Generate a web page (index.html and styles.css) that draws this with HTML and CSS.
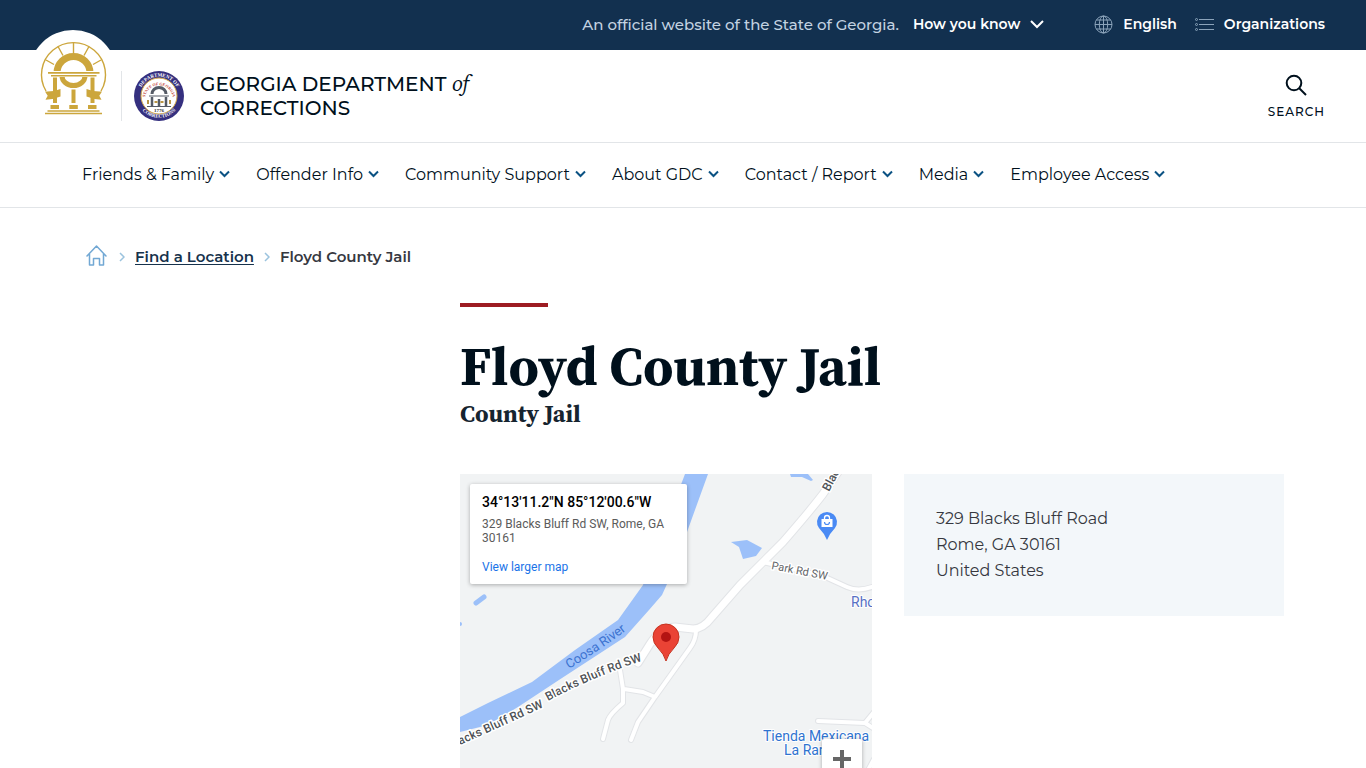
FILE: index.html
```html
<!DOCTYPE html>
<html lang="en">
	<head>
		<meta charset="utf-8">
		<meta name="viewport" content="width=device-width, initial-scale=1">
		<title>Floyd County Jail | Georgia Department of Corrections</title>
		<link rel="stylesheet" href="styles.css">
	</head>
	<body>
		<div class="topbar">
			<div class="official">
				<span>An official website of the State of Georgia.</span>
				<button type="button" class="know">How you know
					<svg width="14" height="9" viewBox="0 0 14 9"><path d="M1 1l6 6 6-6" fill="none" stroke="#fff" stroke-width="2"/></svg>
				</button>
			</div>
			<div class="top-links">
				<a href="#">
					<svg width="19" height="19" viewBox="0 0 19 19" fill="none" stroke="#8ba3ba" stroke-width="1">
						<circle cx="9.500" cy="9.500" r="8.500"/>
						<ellipse cx="9.500" cy="9.500" rx="4.200" ry="8.500"/>
						<path d="M9.500 1v17M1 9.500h17M2.500 5h14M2.500 14h14"/>
					</svg>
					English
				</a>
				<a href="#">
					<svg width="19" height="13" viewBox="0 0 19 13" fill="none" stroke="#8ba3ba" stroke-width="1">
						<circle cx="1.500" cy="1.500" r="1"/><circle cx="1.500" cy="6.500" r="1"/><circle cx="1.500" cy="11.500" r="1"/>
						<path d="M4 1.500h15M4 6.500h15M4 11.500h15"/>
					</svg>
					Organizations
				</a>
			</div>
		</div>

		<header class="header">
			<a href="#" class="arch" aria-label="Georgia.gov">
				<svg width="88" height="88" viewBox="29 30 88 88">
					<circle cx="73" cy="74" r="44" fill="#fff"/>
					<g fill="none" stroke="#cca63c">
						<path d="M46 91A32 32 0 1 1 101 91" stroke-width="1.400"/>
						<path d="M73.500 42v11M58 46.500l5 9M89 46.500l-5 9M46 60l8 4.500M101 60l-8 4.500" stroke-width="1.400"/>
						<path d="M57 73a16.500 16.500 0 0 1 33 0" stroke-width="7"/>
						<path d="M62 76a11.500 9.500 0 0 0 23 0" stroke-width="5"/>
					</g>
					<path d="M47 71h53v6H47z" fill="#fff"/>
					<g fill="#cca63c">
						<path d="M48 72h51.500v1.700H48zM51 75h45.500v1.500H51z"/>
						<path d="M53 77.500h4V103h-4zM71.500 89.500h4V103h-4zM90.500 77.500h4V103h-4z"/>
						<path d="M50.500 105h8.500v4h-8.500zM69.300 105h8.500v4h-8.500zM88 105h8.500v4H88z"/>
						<path d="M47.500 110.300h52v1.400h-52zM45 112.800h57v1.400H45z"/>
						<path d="M45 91.500q8 .5 15.500-2.500v7.500q-7 3-15 3.200l2.200-4zM102 91.500q-8 .5-15.500-2.500v7.500q7 3 15 3.200l-2.200-4z"/>
					</g>
				</svg>
			</a>
			<a href="#" class="agency">
				<svg class="seal" width="50" height="50" viewBox="0 0 50 50">
					<defs>
						<path id="ring-top" d="M5.500 30A20 20 0 1 1 44.500 30"/>
						<path id="ring-bottom" d="M3 29A22.500 22.500 0 0 0 47 29"/>
						<path id="ring-state" d="M11.500 32A14 14 0 1 1 38.500 32"/>
					</defs>
					<circle cx="25" cy="25" r="25" fill="#35307f"/>
					<circle cx="25" cy="25" r="18" fill="#fff" stroke="#d3a747" stroke-width="1"/>
					<g class="seal-text">
						<text><textPath href="#ring-top" startOffset="50%">DEPARTMENT OF</textPath></text>
						<text><textPath href="#ring-bottom" startOffset="50%">CORRECTIONS</textPath></text>
						<text class="seal-state"><textPath href="#ring-state" startOffset="50%">STATE OF GEORGIA</textPath></text>
						<text class="seal-year" x="25" y="41">1776</text>
					</g>
					<g fill="none" stroke="#555b66">
						<path d="M18 23a7 6.500 0 0 1 14 0" stroke-width="3"/>
						<path d="M15 25h20M13 35.500h24" stroke-width="1"/>
						<path d="M18 26v9M25 28v7M32 26v9" stroke-width="2.500"/>
						<path d="M20.500 31h3M26.500 31h3M14 29v4M36 29v4" stroke="#b99545" stroke-width="2"/>
					</g>
				</svg>
				<span class="agency-name">GEORGIA DEPARTMENT <em>of</em><br>CORRECTIONS</span>
			</a>
			<button type="button" class="search">
				<svg width="22" height="22" viewBox="0 0 22 22" fill="none" stroke="#00101c" stroke-width="2"><circle cx="9" cy="9" r="7.300"/><path d="M14 14l7 7"/></svg>
				SEARCH
			</button>
		</header>

		<nav class="nav">
			<button type="button">Friends &amp; Family <svg class="chev" viewBox="0 0 11 8"><path d="M1 1.500l4.500 4.500L10 1.500"/></svg></button>
			<button type="button">Offender Info <svg class="chev" viewBox="0 0 11 8"><path d="M1 1.500l4.500 4.500L10 1.500"/></svg></button>
			<button type="button">Community Support <svg class="chev" viewBox="0 0 11 8"><path d="M1 1.500l4.500 4.500L10 1.500"/></svg></button>
			<button type="button">About GDC <svg class="chev" viewBox="0 0 11 8"><path d="M1 1.500l4.500 4.500L10 1.500"/></svg></button>
			<button type="button">Contact / Report <svg class="chev" viewBox="0 0 11 8"><path d="M1 1.500l4.500 4.500L10 1.500"/></svg></button>
			<button type="button">Media <svg class="chev" viewBox="0 0 11 8"><path d="M1 1.500l4.500 4.500L10 1.500"/></svg></button>
			<button type="button">Employee Access <svg class="chev" viewBox="0 0 11 8"><path d="M1 1.500l4.500 4.500L10 1.500"/></svg></button>
		</nav>

		<div class="breadcrumb">
			<a href="#" class="home" aria-label="Home">
				<svg width="21" height="21" viewBox="0 0 21 21" fill="none" stroke="#72a8d4" stroke-width="1.500" stroke-linejoin="round" stroke-linecap="round"><path d="M1 11l9.500-10L20 11M3.500 9v11h4v-6.500h6V20h4V9"/></svg>
			</a>
			<svg class="sep" viewBox="0 0 6 10"><path d="M1 1l4 4-4 4"/></svg>
			<a href="#">Find a Location</a>
			<svg class="sep" viewBox="0 0 6 10"><path d="M1 1l4 4-4 4"/></svg>
			<span>Floyd County Jail</span>
		</div>

		<main class="main">
			<h1>Floyd County Jail</h1>
			<p class="subtitle">County Jail</p>
			<div class="columns">
				<div class="map">
					<svg class="map-canvas" viewBox="0 0 412 370" preserveAspectRatio="xMidYMid slice">
						<defs>
							<path id="road-label-a" d="M-33 286L84 233"/>
							<path id="road-label-b" d="M88 227Q130 204 190 184"/>
							<path id="river-label" d="M109 195Q146 172 172 152"/>
						</defs>
						<!-- water -->
						<g fill="#9cc0f9">
							<path d="M225 0H248L227 58 207 110 202 121 189 136 165 163 102 204 58 233 28 251 0 258V243L28 229 72 208 115 176 158 146 183 111Z"/>
							<path d="M271 68L287 66 302 74 296 82 283 85 279 73Z"/>
							<path d="M330 0L331 3 342 3 351 7 353 6 348 0Z"/>
							<circle cx="0" cy="150" r="2"/>
						</g>
						<path d="M16 129L24 123" stroke="#9cc0f9" stroke-width="5" stroke-linecap="round"/>
						<!-- streets: grey casing, then white fill -->
						<g class="street casing">
							<path d="M236 156Q236 166 230 174L195 223 178 248 171 266M195 223L183 218 164 215M160 196L163 215V229Q150 240 148 246L143 265"/>
							<path d="M303 88L363 102 387 113Q398 118 412 113M358 247L405 249 416 256M405 249L414 238M406 300L414 285"/>
						</g>
						<path class="road casing" d="M382 -8L363 20Q350 37 323 68L280 111 252 143Q243 155 233 155L215 153Q200 154 190 170L178 189"/>
						<g class="street">
							<path d="M236 156Q236 166 230 174L195 223 178 248 171 266M195 223L183 218 164 215M160 196L163 215V229Q150 240 148 246L143 265"/>
							<path d="M303 88L363 102 387 113Q398 118 412 113M358 247L405 249 416 256M405 249L414 238M406 300L414 285"/>
						</g>
						<path class="road" d="M382 -8L363 20Q350 37 323 68L280 111 252 143Q243 155 233 155L215 153Q200 154 190 170L178 189"/>
						<!-- labels -->
						<text class="road-text end"><textPath href="#road-label-a" startOffset="100%">Blacks Bluff Rd SW</textPath></text>
						<text class="road-text"><textPath href="#road-label-b">Blacks Bluff Rd SW</textPath></text>
						<text class="road-text" transform="translate(369 18) rotate(-62)">Blac</text>
						<text class="road-text minor" transform="translate(311 95) rotate(11)">Park Rd SW</text>
						<text class="river-text"><textPath href="#river-label">Coosa River</textPath></text>
						<text class="place-text rhodes" x="391" y="133">Rho</text>
						<text class="place-text" x="303" y="267">Tienda Mexicana</text>
						<text class="place-text" x="324" y="281">La Ranchera</text>
						<!-- shop -->
						<path d="M367 66Q364 59 359 54A10 10 0 1 1 375 54Q370 59 367 66Z" fill="#4a8af4"/>
						<path d="M361.500 45h11v8h-11z" fill="#fff"/>
						<path d="M364.500 45v-1a2.500 2.500 0 0 1 5 0v1" fill="none" stroke="#fff" stroke-width="1.300"/>
						<path d="M364.500 48a2.500 2.500 0 0 0 5 0" fill="none" stroke="#4a8af4" stroke-width="1.200"/>
						<!-- marker -->
						<path d="M206 187Q204 180 198 174Q193 169 193 163A13 13 0 1 1 219 163Q219 169 214 174Q208 180 206 187Z" fill="#ea4335" stroke="#c5321f" stroke-width="1"/>
						<circle cx="206" cy="163" r="5" fill="#b31412"/>
					</svg>
					<div class="map-card">
						<strong>34°13'11.2"N 85°12'00.6"W</strong>
						<p>329 Blacks Bluff Rd SW, Rome, GA 30161</p>
						<a href="#">View larger map</a>
					</div>
					<div class="map-zoom">
						<button type="button" aria-label="Zoom in"><svg width="18" height="18" viewBox="0 0 18 18"><path d="M9 0v18M0 9h18" stroke="#666" stroke-width="4"/></svg></button>
						<button type="button" aria-label="Zoom out"><svg width="18" height="18" viewBox="0 0 18 18"><path d="M0 9h18" stroke="#666" stroke-width="4"/></svg></button>
					</div>
				</div>
				<address class="address">
					329 Blacks Bluff Road<br>
					Rome, GA 30161<br>
					United States
				</address>
			</div>
		</main>
	</body>
</html>
```
FILE: styles.css
```css
* { box-sizing: border-box; }
body {
	margin: 0;
	font-family: Montserrat, Inter, sans-serif;
	font-size: 15px;
	color: #00101c;
	background: #fff;
}
a { color: inherit; text-decoration: none; }
button {
	padding: 0;
	border: none;
	background: none;
	font: inherit;
	color: inherit;
	cursor: pointer;
}
svg { display: block; flex: none; }

.topbar {
	display: flex;
	justify-content: flex-end;
	align-items: center;
	gap: 50px;
	height: 50px;
	padding: 0 41px 2px;
	background: #12304f;
	color: #fff;
	font-size: 14px;
	font-weight: 600;
}
.official, .top-links { display: flex; align-items: center; }
.official { gap: 14px; }
.official span { font-size: 15px; font-weight: 500; color: #c3d3e2; }
.know { display: flex; align-items: center; gap: 10px; }
.top-links { gap: 18px; }
.top-links a { display: flex; align-items: center; gap: 10px; }

.header {
	display: flex;
	align-items: center;
	height: 93px;
	padding: 0 41px 0 29px;
	border-bottom: 1px solid #e2e5e8;
}
.arch { align-self: flex-start; margin-top: -20px; }
.agency {
	display: flex;
	align-items: center;
	gap: 16px;
	margin-left: 4px;
	padding-left: 12px;
	border-left: 1px solid #e2e5e8;
}
.seal-text {
	font: bold 5px "Liberation Serif", serif;
	fill: #fff;
	text-anchor: middle;
}
.seal-state { font-size: 4px; fill: #c0392b; }
.seal-year { font-size: 5px; fill: #333; }
.agency-name {
	font-size: 20px;
	font-weight: 500;
	line-height: 24px;
}
.agency-name em {
	font-family: "Source Serif 4", "Source Serif Pro", "Liberation Serif", serif;
	font-size: 22px;
	font-weight: 400;
	line-height: 1;
}
.search {
	display: flex;
	flex-direction: column;
	align-items: center;
	gap: 8px;
	margin-left: auto;
	padding-top: 1px;
	font-size: 12px;
	font-weight: 500;
	letter-spacing: 1px;
}

.nav {
	display: flex;
	gap: 26px;
	height: 65px;
	padding: 0 82px 2px;
	border-bottom: 1px solid #e2e5e8;
	font-size: 16px;
}
.nav button { display: flex; align-items: center; gap: 5px; white-space: nowrap; }
.chev {
	width: 11px;
	height: 8px;
	fill: none;
	stroke: #0b5283;
	stroke-width: 2;
}

.breadcrumb {
	display: flex;
	align-items: center;
	gap: 10px;
	padding: 37px 86px 0;
	line-height: 24px;
	font-weight: 600;
	color: #36383f;
}
.breadcrumb a { color: #16324c; text-decoration: underline; text-underline-offset: 2px; }
.home { margin-right: 2px; padding-bottom: 3px; }
.sep { width: 6px; height: 10px; fill: none; stroke: #9bc3de; stroke-width: 1.5; }

.main { margin: 34px 82px 0 460px; }
.main::before {
	content: "";
	display: block;
	width: 88px;
	height: 4px;
	background: #9d1c22;
}
h1, .subtitle {
	margin: 0;
	font-family: "Source Serif 4", "Source Serif Pro", "Liberation Serif", serif;
	font-weight: bold;
}
h1 { margin-top: 27px; font-size: 54px; line-height: 64px; }
.subtitle { font-size: 24px; line-height: 32px; color: #16242f; }
.columns {
	display: grid;
	grid-template-columns: 1fr 380px;
	align-items: start;
	gap: 32px;
	margin-top: 44px;
}
.address {
	padding: 32px;
	background: #f3f7fa;
	font-size: 16px;
	font-style: normal;
	line-height: 26px;
	color: #36383f;
}

.map {
	position: relative;
	height: 370px;
	overflow: hidden;
	background: #f1f3f4;
	font-family: Roboto, sans-serif;
}
.map-canvas { width: 100%; height: 100%; }
.street, .road { fill: none; stroke: #fff; stroke-width: 4; stroke-linecap: round; stroke-linejoin: round; }
.road { stroke-width: 7; }
.street.casing { stroke: #e2e4e7; stroke-width: 6; }
.road.casing { stroke: #e2e4e7; stroke-width: 9; }
.map-canvas text { paint-order: stroke; stroke-linejoin: round; }
.road-text { font-size: 12px; font-weight: 500; fill: #4f5357; stroke: #fff; stroke-width: 3; }
.road-text.end { text-anchor: end; }
.road-text.minor { font-size: 11px; font-weight: 400; fill: #5f6367; }
.river-text { font-size: 13px; fill: #3b72d0; }
.place-text { font-size: 14px; fill: #2f73d0; stroke: #fff; stroke-width: 2; }
.place-text.rhodes { fill: #5870c4; }
.map-card {
	position: absolute;
	top: 10px;
	left: 10px;
	width: 217px;
	padding: 9px 12px;
	border-radius: 2px;
	background: #fff;
	box-shadow: 0 1px 4px rgba(0, 0, 0, 0.3);
	font-size: 12px;
	line-height: 14px;
	color: #5b5b5b;
}
.map-card strong { display: block; font-size: 14px; font-weight: 500; line-height: 18px; color: #000; }
.map-card p { margin: 6px 0 14px; }
.map-card a { display: block; line-height: 16px; color: #1a73e8; }
.map-zoom {
	position: absolute;
	right: 10px;
	bottom: 25px;
	width: 40px;
	border-radius: 2px;
	background: #fff;
	box-shadow: 0 1px 4px rgba(0, 0, 0, 0.3);
}
.map-zoom button { display: flex; align-items: center; justify-content: center; width: 40px; height: 40px; }
```
